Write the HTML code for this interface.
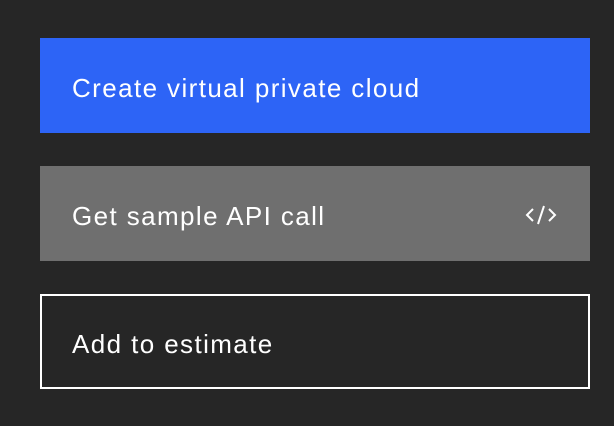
<!DOCTYPE html>
<html><head><style>
body{margin:0;width:614px;height:426px;background:#262626;overflow:hidden;font-family:"Liberation Sans",sans-serif;position:relative}
.b{position:absolute;left:40px;width:550px;height:95px;box-sizing:border-box;color:#fff;font-size:26px;line-height:101px;padding-left:32px;letter-spacing:1.4px}
.p{top:38px;background:#2d64f6}
.g{top:166px;background:#6f6f6f}
.o{top:294px;border:2px solid #fff;padding-left:30px;line-height:97px}
svg{position:absolute;left:485px;top:39px}
</style></head><body>
<div class="b p">Create virtual private cloud</div>
<div class="b g">Get sample API call<svg width="32" height="20" viewBox="0 0 32 20"><path d="M8 4 L2 10 L8 16 M24 4 L30 10 L24 16 M19 1 L13 19" stroke="#fff" stroke-width="2" fill="none"/></svg></div>
<div class="b o">Add to estimate</div>
</body></html>
